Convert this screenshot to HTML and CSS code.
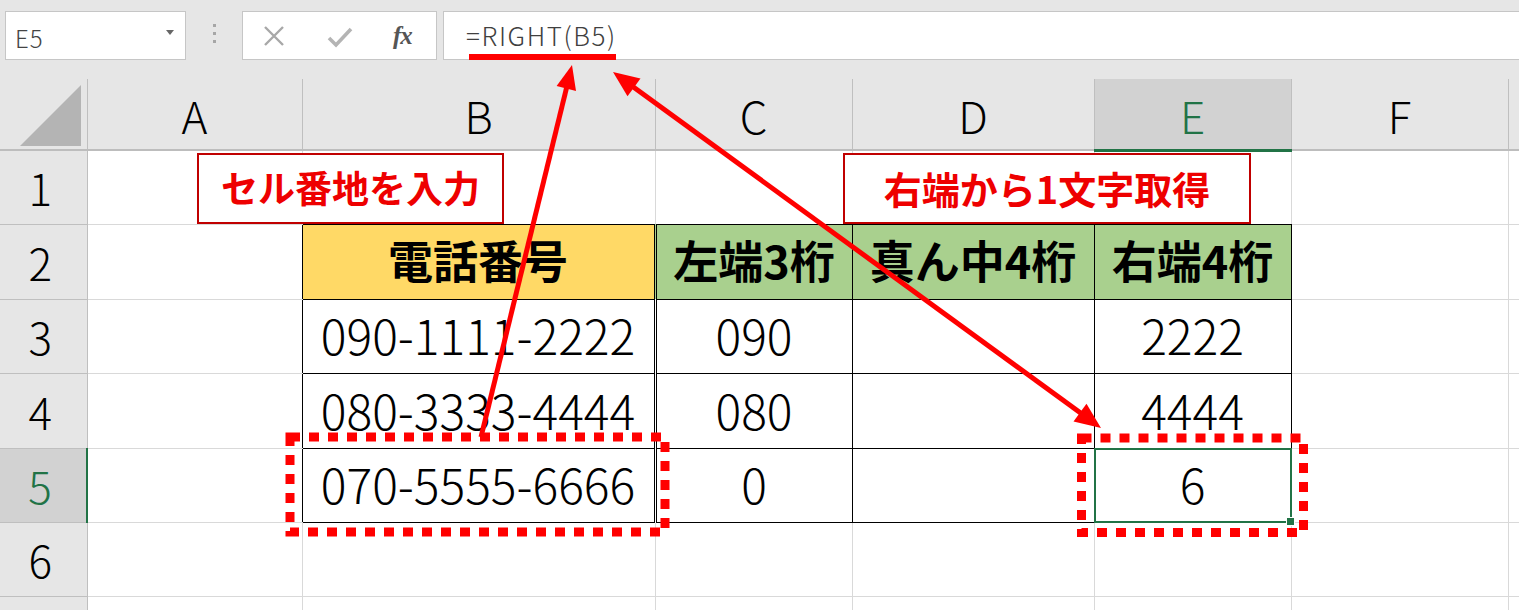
FILE: index.html
```html
<!DOCTYPE html>
<html lang="ja">
<head>
<meta charset="utf-8">
<title>RIGHT関数</title>
<link rel="stylesheet" href="styles.css">
</head>
<body>
<div class="page">
  <div class="toolbar">
    <div class="namebox"><span class="ref">E5</span><span class="dd"></span></div>
    <div class="grip"><i></i><i></i><i></i></div>
    <div class="fbtns">
      <svg class="ico x" width="24" height="24" viewBox="0 0 24 24"><path d="M3 3 L21 21 M21 3 L3 21" stroke="#a8a8a8" stroke-width="2.4" fill="none"/></svg>
      <svg class="ico ok" width="26" height="24" viewBox="0 0 26 24"><path d="M2 13 L9 20 L24 4" stroke="#b4b4b4" stroke-width="3.6" fill="none"/></svg>
      <span class="fx">fx</span>
    </div>
    <div class="formula">=RIGHT(B5)</div>
  </div>

  <table class="sheet">
    <colgroup>
      <col class="w-rh"><col class="w-a"><col class="w-b"><col class="w-c"><col class="w-d"><col class="w-e"><col class="w-f"><col class="w-g">
    </colgroup>
    <tr class="h0">
      <th class="corner"><svg width="66" height="70" viewBox="0 0 66 70"><polygon points="62,6 62,67 1,67" fill="#b4b4b4"/></svg></th>
      <th class="ch">A</th><th class="ch">B</th><th class="ch">C</th><th class="ch">D</th><th class="ch selc">E</th><th class="ch">F</th><th class="ch"></th>
    </tr>
    <tr class="r r74">
      <th class="rh">1</th><td></td><td class="tt"></td><td class="tt"></td><td class="tt"></td><td class="tt"></td><td></td><td></td>
    </tr>
    <tr class="r r75">
      <th class="rh">2</th><td class="tl"></td><td class="tb yel bd hd">電話番号</td><td class="tb grn hd">左端3桁</td><td class="tb grn hd">真ん中4桁</td><td class="tb grn hd">右端4桁</td><td></td><td></td>
    </tr>
    <tr class="r r74">
      <th class="rh">3</th><td class="tl"></td><td class="tb bd">090-1111-2222</td><td class="tb">090</td><td class="tb"></td><td class="tb">2222</td><td></td><td></td>
    </tr>
    <tr class="r r75">
      <th class="rh">4</th><td class="tl"></td><td class="tb bd">080-3333-4444</td><td class="tb">080</td><td class="tb"></td><td class="tb">4444</td><td></td><td></td>
    </tr>
    <tr class="r r74">
      <th class="rh selr">5</th><td class="tl"></td><td class="tb bd">070-5555-6666</td><td class="tb">0</td><td class="tb"></td><td class="tb sel">6</td><td></td><td></td>
    </tr>
    <tr class="r r74">
      <th class="rh">6</th><td></td><td></td><td></td><td></td><td></td><td></td><td></td>
    </tr>
    <tr class="r r30">
      <th class="rh"></th><td></td><td></td><td></td><td></td><td></td><td></td><td></td>
    </tr>
  </table>

  <div class="callout c1">セル番地を入力</div>
  <div class="callout c2">右端から1文字取得</div>

  <svg class="annot" width="1519" height="610" viewBox="0 0 1519 610">
    <rect x="469" y="54" width="147" height="6" fill="#ff0000"/>
    <line x1="481" y1="437" x2="567" y2="86" stroke="#ff0000" stroke-width="5"/>
    <polygon points="572,65 576,91 556.6,86" fill="#ff0000"/>
    <line x1="632" y1="86" x2="1082" y2="414" stroke="#ff0000" stroke-width="5"/>
    <polygon points="613,72 627.5,96.2 640.5,78.4" fill="#ff0000"/>
    <polygon points="1101,428 1073.5,421.6 1086.5,403.8" fill="#ff0000"/>
    <rect x="290" y="437" width="375" height="95" fill="none" stroke="#ff0000" stroke-width="9" stroke-dasharray="10 9"/>
    <rect x="1081.5" y="438" width="222" height="94.5" fill="none" stroke="#ff0000" stroke-width="9" stroke-dasharray="10 9"/>
  </svg>
</div>
</body>
</html>
```

FILE: styles.css
```css
* { box-sizing: border-box; }
html, body { margin: 0; padding: 0; }
body {
  width: 1519px;
  height: 610px;
  overflow: hidden;
  background: #e6e6e6;
  font-family: "Noto Sans CJK JP", "Noto Sans", sans-serif;
}
.page {
  position: relative;
  width: 1519px;
  height: 610px;
  overflow: hidden;
}

/* formula bar */
.toolbar {
  display: flex;
  align-items: flex-start;
  height: 62px;
  padding-top: 11px;
}
.namebox {
  margin-left: 5px;
  width: 181px;
  height: 49px;
  background: #fff;
  border: 1px solid #c6c6c6;
  display: flex;
  align-items: center;
  justify-content: space-between;
  padding: 0 11px 0 9px;
}
.ref {
  font-size: 24px;
  font-weight: 300;
  letter-spacing: 1px;
  color: #444;
  padding-top: 4px;
}
.dd {
  width: 0;
  height: 0;
  border-left: 4px solid transparent;
  border-right: 4px solid transparent;
  border-top: 5px solid #666;
  margin-bottom: 6px;
}
.grip {
  width: 56px;
  height: 49px;
  display: flex;
  flex-direction: column;
  align-items: center;
  justify-content: center;
  gap: 5px;
  padding-bottom: 4px;
}
.grip i {
  display: block;
  width: 3px;
  height: 3px;
  background: #a6a6a6;
}
.fbtns {
  width: 195px;
  height: 49px;
  background: #fff;
  border: 1px solid #c6c6c6;
  display: flex;
  align-items: center;
  padding-left: 19px;
}
.ico { display: block; }
.ico.ok { margin-left: 41px; margin-top: 2px; }
.fx {
  margin-left: 40px;
  font-family: "Liberation Serif", "DejaVu Serif", serif;
  font-style: italic;
  font-weight: bold;
  font-size: 25px;
  color: #555;
  letter-spacing: -1px;
}
.formula {
  flex: 1;
  margin-left: 6px;
  height: 49px;
  background: #fff;
  border: 1px solid #c6c6c6;
  border-right: none;
  padding-left: 22px;
  font-size: 26px;
  font-weight: 300;
  letter-spacing: 1.6px;
  color: #404040;
  line-height: 45px;
}

/* sheet */
.sheet {
  border-collapse: collapse;
  table-layout: fixed;
  width: 1519px;
  margin-top: 17px;
}
.w-rh { width: 87px; }
.w-a { width: 215px; }
.w-b { width: 353px; }
.w-c { width: 197px; }
.w-d { width: 242px; }
.w-e { width: 197px; }
.w-f { width: 217px; }
.w-g { width: 11px; }

.h0 { height: 71px; }
.r74 { height: 74px; }
.r75 { height: 75px; }
.r30 { height: 30px; }

.sheet th {
  background: #e6e6e6;
  border: 1px solid #bfbfbf;
  padding: 0;
  font-weight: 300;
  font-size: 44px;
  line-height: 1;
  color: #000;
  text-align: center;
  vertical-align: middle;
}
.sheet th.ch {
  border-top: none;
  border-bottom: 2px solid #bdbdbd;
  padding-top: 2px;
}
.sheet th.corner {
  border-top: none;
  border-left: none;
  border-bottom: 2px solid #bdbdbd;
  text-align: left;
  vertical-align: top;
  padding: 0 0 0 19px;
}
.corner svg { display: block; }
.sheet th.rh {
  border-left: none;
  border-right: 1px solid #bfbfbf;
  padding-right: 6px;
}
.sheet th.selc {
  background: #d2d2d2;
  color: #217346;
  border-bottom: 3px solid #217346;
}
.sheet th.selr {
  background: #d2d2d2;
  color: #217346;
  border-right: 2px solid #217346;
}

.sheet td {
  background: #fff;
  border: 1px solid #d9d9d9;
  padding: 0 0 4px 0;
  text-align: center;
  vertical-align: middle;
  font-size: 48px;
  font-weight: 300;
  line-height: 1;
  color: #000;
  white-space: nowrap;
}
.sheet td.tt { border-bottom: 1px solid #000; }
.sheet td.tl { border-right: 1px solid #000; }
.sheet td.tb { border: 1px solid #000; }
.sheet td.bd { border-right: 3px double #000; }
.sheet td.yel { background: #ffd966; }
.sheet td.grn { background: #a9d08e; }
.sheet td.hd {
  font-weight: bold;
  font-size: 45px;
}
.sheet td.sel { position: relative; }
.sheet td.sel::after {
  content: "";
  position: absolute;
  left: -1px;
  top: -1px;
  right: -1px;
  bottom: -1px;
  border: 2px solid #217346;
}
.sheet td.sel::before {
  content: "";
  position: absolute;
  right: -4px;
  bottom: -4px;
  width: 7px;
  height: 7px;
  background: #217346;
  border: 1px solid #fff;
  z-index: 1;
}

/* annotations */
.callout {
  position: absolute;
  background: #fff;
  border: 2px solid #c00000;
  color: #ee0000;
  font-weight: bold;
  font-size: 37px;
  display: flex;
  align-items: center;
  justify-content: center;
  line-height: 1;
  padding-bottom: 2px;
}
.c1 { left: 197px; top: 153px; width: 307px; height: 71px; }
.c2 { left: 843px; top: 153px; width: 408px; height: 71px; font-size: 38px; }
.annot {
  position: absolute;
  left: 0;
  top: 0;
  pointer-events: none;
}
```
